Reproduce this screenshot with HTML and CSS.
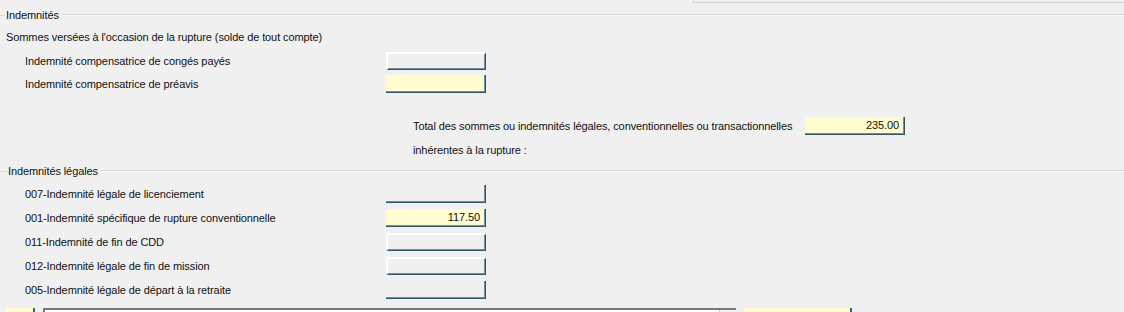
FILE: index.html
```html
<!DOCTYPE html>
<html>
  <head>
    <title>Indemnités</title>
    <link rel="stylesheet" href="styles.css">
  </head>
  <body>
    <div class="top-panel"></div>

    <div class="group-title first">
      <span class="tick"></span>
      <span class="caption">Indemnités</span>
      <span class="rule"></span>
    </div>
    <div class="subtitle">Sommes versées à l'occasion de la rupture (solde de tout compte)</div>

    <div class="row lead">
      <span class="label">Indemnité compensatrice de congés payés</span>
      <span class="field raised"></span>
    </div>
    <div class="row">
      <span class="label">Indemnité compensatrice de préavis</span>
      <span class="field yellow"></span>
    </div>

    <div class="total">
      <div class="total-line">
        <span class="total-label">Total des sommes ou indemnités légales, conventionnelles ou transactionnelles</span>
        <span class="field yellow">235.00</span>
      </div>
      <div class="total-end">inhérentes à la rupture :</div>
    </div>

    <div class="group-title second">
      <span class="tick"></span>
      <span class="caption">Indemnités légales</span>
      <span class="rule"></span>
    </div>

    <div class="row legal lead">
      <span class="label">007-Indemnité légale de licenciement</span>
      <span class="field"></span>
    </div>
    <div class="row legal">
      <span class="label">001-Indemnité spécifique de rupture conventionnelle</span>
      <span class="field yellow">117.50</span>
    </div>
    <div class="row legal">
      <span class="label">011-Indemnité de fin de CDD</span>
      <span class="field raised"></span>
    </div>
    <div class="row legal">
      <span class="label">012-Indemnité légale de fin de mission</span>
      <span class="field raised"></span>
    </div>
    <div class="row legal">
      <span class="label">005-Indemnité légale de départ à la retraite</span>
      <span class="field"></span>
    </div>

    <div class="bottom-row">
      <span class="code yellow"></span>
      <span class="list"><span class="scroll"></span></span>
      <span class="amount yellow"></span>
    </div>
  </body>
</html>
```

FILE: styles.css
```css
html {
  background-color: #f0f0f0;
}

body {
  margin: 0;
  font-family: "Liberation Sans", Arial, sans-serif;
  font-size: 11px;
  letter-spacing: -0.1px;
  color: #111;
  overflow: hidden;
  height: 312px;
}

.top-panel {
  height: 2px;
  margin-left: 693px;
  border-left: 1px solid #d4d4d4;
  border-bottom: 1px solid #d4d4d4;
}

.group-title {
  display: flex;
  align-items: center;
  height: 18px;
}
.group-title.first {
  margin-top: 3px;
}
.group-title .tick {
  width: 5px;
  border-top: 1px solid #d8d8d8;
}
.group-title.second .tick {
  width: 7px;
}
.group-title .caption {
  padding: 0 3px 0 1px;
}
.group-title .rule {
  flex: 1;
  border-top: 1px solid #d8d8d8;
  border-bottom: 1px solid #fafafa;
}

.subtitle {
  height: 22px;
  line-height: 22px;
  margin-top: 2px;
  padding-left: 6px;
}

.row {
  display: flex;
  align-items: center;
  height: 23px;
  padding-left: 25px;
}
.row.lead {
  margin-top: 1px;
}
.row.legal {
  height: 24px;
}
.row.legal.lead {
  margin-top: 2px;
}
.row .label {
  width: 361px;
  white-space: nowrap;
}

.field {
  box-sizing: border-box;
  display: inline-block;
  width: 100px;
  height: 18px;
  line-height: 16px;
  padding-right: 5px;
  text-align: right;
  border-right: 1px solid #2f5468;
  border-bottom: 1px solid #2f5468;
  box-shadow: inset -1px -1px 0 #6f8fa2;
}
.field.raised {
  border-top: 2px solid #fff;
  border-left: 2px solid #fff;
}
.yellow {
  background-color: #fffcd0;
}

.total {
  padding-left: 413px;
  margin-top: 20px;
}
.total-line {
  display: flex;
  align-items: center;
  height: 22px;
}
.total-label {
  width: 392px;
  white-space: nowrap;
}
.total-end {
  height: 25px;
  line-height: 26px;
}

.bottom-row {
  display: flex;
  margin-top: 6px;
  padding-left: 6px;
  gap: 7px;
}
.code {
  box-sizing: border-box;
  width: 29px;
  height: 18px;
  border-right: 2px solid #3d6076;
}
.list {
  box-sizing: border-box;
  position: relative;
  width: 693px;
  height: 18px;
  margin-left: 1px;
  background-color: #fff;
  border-top: 2px solid #7a7a7a;
  border-left: 2px solid #7a7a7a;
}
.scroll {
  position: absolute;
  right: 0;
  top: 0;
  width: 16px;
  height: 16px;
  background-color: #f0f0f0;
  border-left: 1px solid #cfcfcf;
}
.amount {
  box-sizing: border-box;
  width: 108px;
  height: 18px;
  margin-left: 1px;
  border-right: 2px solid #3d6076;
}
```
